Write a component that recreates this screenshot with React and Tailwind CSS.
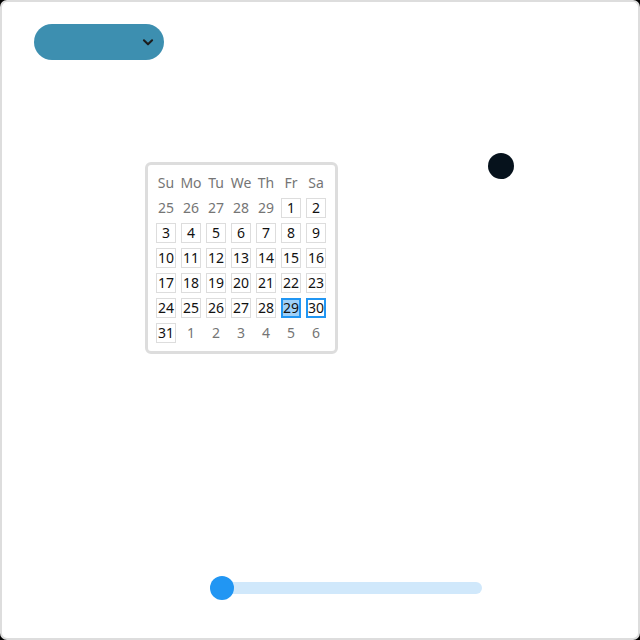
const weekDays = ["Su", "Mo", "Tu", "We", "Th", "Fr", "Sa"];

const days = [
  ...[25, 26, 27, 28, 29].map((d) => ({ d, out: true })),
  ...Array.from({ length: 31 }, (_, i) => ({ d: i + 1 })),
  ...[1, 2, 3, 4, 5, 6].map((d) => ({ d, out: true })),
];

const Calendar = () => (
  <div className="w-[193px] rounded-[6px] border-[3px] border-[#dddddd] bg-white p-[8px]">
    <div className="grid grid-cols-[repeat(7,20px)] auto-rows-[20px] gap-[5px] text-[14px] leading-none">
      {weekDays.map((w) => (
        <div key={w} className="flex items-center justify-center text-[#757575]">
          {w}
        </div>
      ))}
      {days.map(({ d, out }, i) => {
        let cls = "border border-[#dddddd] text-[#111111]";
        if (out) cls = "text-[#757575]";
        else if (d === 29) cls = "border-2 border-[#2196f3] bg-[#9fd0f7] text-[#111111]";
        else if (d === 30) cls = "border-2 border-[#2196f3] text-[#111111]";
        return (
          <div key={i} className={`flex items-center justify-center ${cls}`}>
            {d}
          </div>
        );
      })}
    </div>
  </div>
);

export default function App() {
  return (
    <div className="w-[640px] h-[640px] bg-black" style={{ fontFamily: "'Noto Sans', 'Open Sans', sans-serif" }}>
      <div className="flex h-full flex-col rounded-[7px] border-2 border-[#dddddd] bg-white">
        {/* Dropdown */}
        <div className="ml-[32px] mt-[22px] flex h-[36px] w-[130px] items-center justify-end rounded-full bg-[#3d8fb0] pr-[9px]">
          <svg width="14" height="14" viewBox="0 0 24 24" fill="none" stroke="#1c1c1c" strokeWidth="3.5" strokeLinecap="round" strokeLinejoin="round">
            <path d="M5 9l7 7 7-7" />
          </svg>
        </div>

        {/* Calendar + dot */}
        <div className="mt-[102px] ml-[143px] flex items-start">
          <Calendar />
          <div className="ml-[150px] mt-[-9px] h-[26px] w-[26px] rounded-full bg-[#06121c]" />
        </div>

        {/* Slider */}
        <div className="mt-auto mb-[44px] ml-[220px]">
          <div className="relative h-[12px] w-[260px] rounded-full bg-[#d0e8fb]">
            <div className="absolute left-[-12px] top-[-6px] h-[24px] w-[24px] rounded-full bg-[#2196f3]" />
          </div>
        </div>
      </div>
    </div>
  );
}
